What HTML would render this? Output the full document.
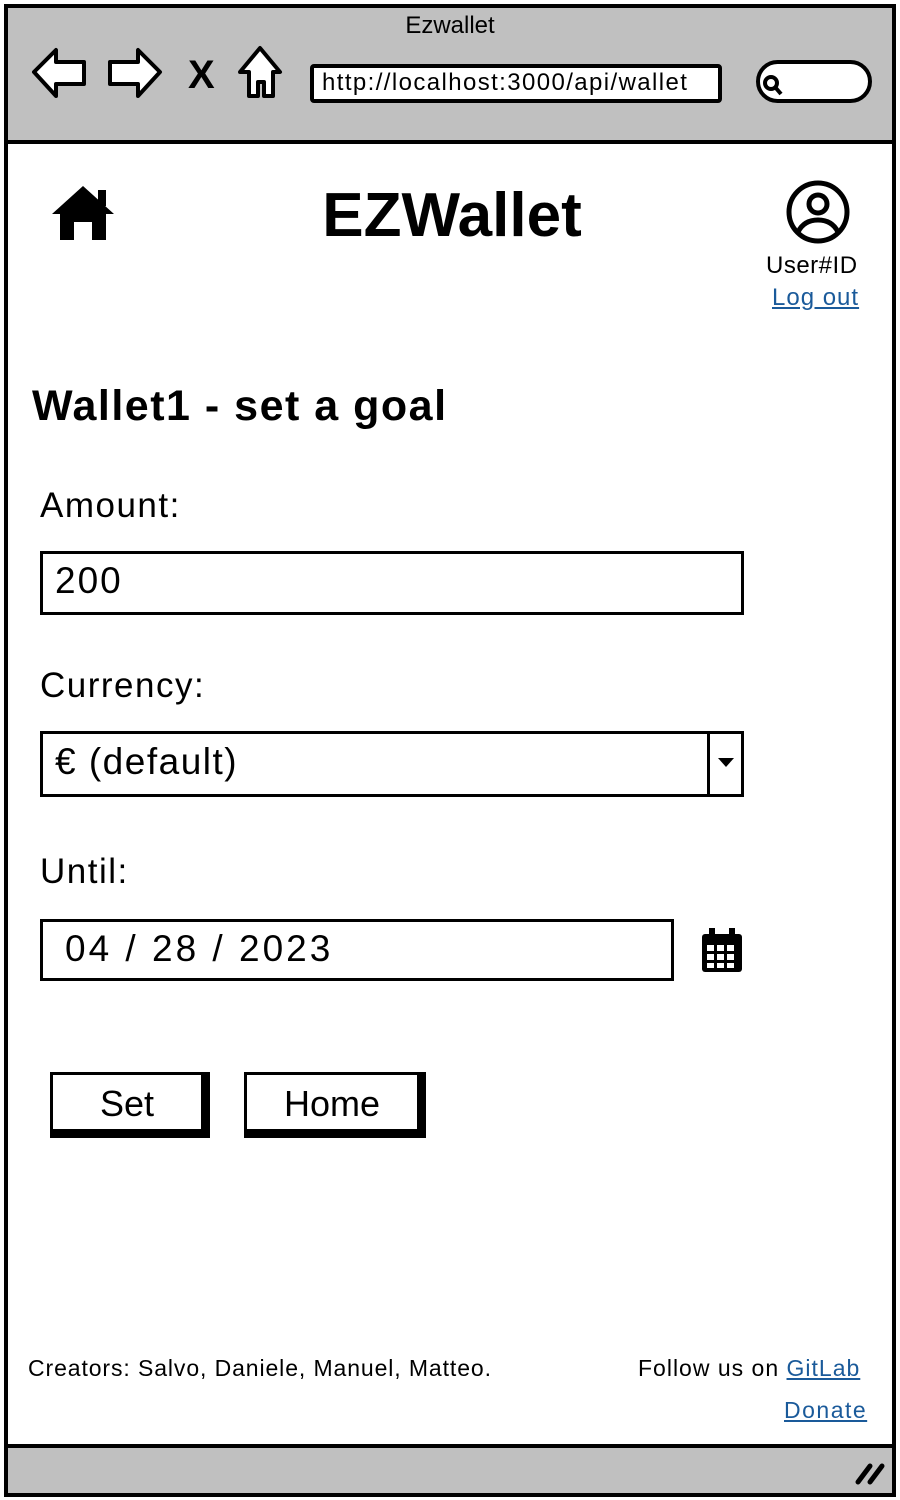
<!DOCTYPE html>
<html><head><meta charset="utf-8"><style>
*{margin:0;padding:0;box-sizing:border-box}
body{width:900px;height:1500px;background:#fff;font-family:"Liberation Sans",sans-serif;position:relative;overflow:hidden;color:#000}
.a{position:absolute;white-space:nowrap}
.box{position:absolute;border:3px solid #000;background:#fff}
a{color:#1a5a9a;text-decoration:underline}
</style></head><body>
<div class="a" style="left:4px;top:4px;width:892px;height:1493px;border:4px solid #000"></div>
<div class="a" style="left:8px;top:8px;width:884px;height:136px;background:#c0c0c0;border-bottom:4px solid #000"></div>
<div class="a" style="left:8px;top:1444px;width:884px;height:49px;background:#c0c0c0;border-top:4px solid #000"></div>
<div class="a" style="left:0;width:900px;top:12px;text-align:center;font-size:24px">Ezwallet</div>
<svg class="a" style="left:30px;top:44px" width="260" height="60" viewBox="0 0 260 60">
<g fill="#fff" stroke="#000" stroke-width="4" stroke-linejoin="round">
<path d="M4 28 L26 6 L26 18 L54 18 L54 40 L26 40 L26 52 Z"/>
<path d="M130 28 L108 6 L108 18 L80 18 L80 40 L108 40 L108 52 Z"/>
<path d="M230 4 L250 28 L243 28 L243 52 L234 52 L234 38 L228 38 L228 52 L219 52 L219 28 L210 28 Z"/>
</g>
<text x="158" y="44" font-family="Liberation Sans" font-weight="bold" font-size="40">X</text>
</svg>
<div class="a" style="left:310px;top:64px;width:412px;height:39px;background:#fff;border:4px solid #000;border-radius:4px;font-size:24px;padding:1px 0 0 8px;letter-spacing:1.4px">http://localhost:3000/api/wallet</div>
<div class="a" style="left:756px;top:60px;width:116px;height:43px;background:#fff;border:4px solid #000;border-radius:22px"></div>
<svg class="a" style="left:760px;top:72px" width="26" height="26"><circle cx="11" cy="11" r="6" fill="none" stroke="#000" stroke-width="4"/><path d="M15 15 L21 22" stroke="#000" stroke-width="4"/></svg>
<svg class="a" style="left:50px;top:184px" width="66" height="58" viewBox="0 0 66 58"><path d="M33 2 L64 30 L56 30 L56 56 L42 56 L42 38 L24 38 L24 56 L10 56 L10 30 L2 30 Z" fill="#000"/><rect x="48" y="6" width="8" height="16" fill="#000"/></svg>
<div class="a" style="left:0;width:900px;top:180px;text-align:center;font-size:62px;font-weight:bold;letter-spacing:0px;padding-left:4px">EZWallet</div>
<svg class="a" style="left:784px;top:178px" width="68" height="68" viewBox="0 0 68 68"><circle cx="34" cy="34" r="29" fill="none" stroke="#000" stroke-width="5"/><circle cx="34" cy="26" r="9" fill="none" stroke="#000" stroke-width="5"/><path d="M14 54 Q20 42 34 42 Q48 42 54 54" fill="none" stroke="#000" stroke-width="5"/></svg>
<div class="a" style="left:766px;top:252px;font-size:24px;letter-spacing:0.5px">User#ID</div>
<div class="a" style="left:772px;top:284px;font-size:24px;letter-spacing:1px"><a>Log out</a></div>
<div class="a" style="left:32px;top:382px;font-size:43px;font-weight:bold;letter-spacing:1.5px">Wallet1 - set a goal</div>
<div class="a" style="left:40px;top:486px;font-size:35px;letter-spacing:1.5px">Amount:</div>
<div class="box" style="left:40px;top:551px;width:704px;height:64px;font-size:37px;padding:6px 0 0 12px;letter-spacing:2px">200</div>
<div class="a" style="left:40px;top:666px;font-size:35px;letter-spacing:1.5px">Currency:</div>
<div class="box" style="left:40px;top:731px;width:704px;height:66px;font-size:37px;padding:7px 0 0 12px;letter-spacing:1.5px">€ (default)</div>
<div class="a" style="left:707px;top:733px;width:3px;height:62px;background:#000"></div>
<div class="a" style="left:718px;top:758px;width:0;height:0;border-left:8px solid transparent;border-right:8px solid transparent;border-top:9px solid #000"></div>
<div class="a" style="left:40px;top:852px;font-size:35px;letter-spacing:1.5px">Until:</div>
<div class="box" style="left:40px;top:919px;width:634px;height:62px;font-size:37px;padding:6px 0 0 22px;letter-spacing:3px">04 / 28 / 2023</div>
<svg class="a" style="left:700px;top:926px" width="44" height="48" viewBox="0 0 44 48"><rect x="2" y="8" width="40" height="38" rx="3" fill="#000"/><rect x="9" y="2" width="6" height="10" fill="#000"/><rect x="29" y="2" width="6" height="10" fill="#000"/><g fill="#fff"><rect x="7" y="19" width="7" height="6"/><rect x="17" y="19" width="7" height="6"/><rect x="27" y="19" width="7" height="6"/><rect x="7" y="28" width="7" height="6"/><rect x="17" y="28" width="7" height="6"/><rect x="27" y="28" width="7" height="6"/><rect x="7" y="37" width="7" height="5"/><rect x="17" y="37" width="7" height="5"/><rect x="27" y="37" width="7" height="5"/></g></svg>
<div class="a" style="left:50px;top:1072px;width:160px;height:66px;background:#000"></div>
<div class="box" style="left:50px;top:1072px;width:154px;height:60px;text-align:center;font-size:36px;padding-top:8px">Set</div>
<div class="a" style="left:244px;top:1072px;width:182px;height:66px;background:#000"></div>
<div class="box" style="left:244px;top:1072px;width:176px;height:60px;text-align:center;font-size:36px;padding-top:8px">Home</div>
<div class="a" style="left:28px;top:1355px;font-size:23px;letter-spacing:0.9px">Creators: Salvo, Daniele, Manuel, Matteo.</div>
<div class="a" style="left:638px;top:1355px;font-size:23px;letter-spacing:1px">Follow us on <a>GitLab</a></div>
<div class="a" style="left:784px;top:1397px;font-size:23px;letter-spacing:1.5px"><a>Donate</a></div>
<svg class="a" style="left:854px;top:1460px" width="34" height="26"><path d="M4 22 L16 6 M16 22 L28 6" stroke="#000" stroke-width="5" stroke-linecap="round"/></svg>
</body></html>
